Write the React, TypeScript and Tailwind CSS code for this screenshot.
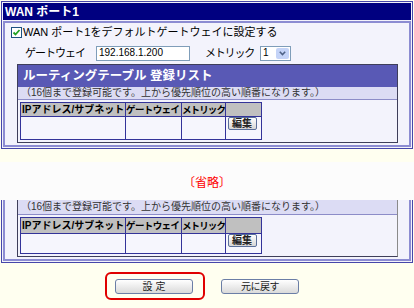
import React from "react";

const FONT = { fontFamily: "'Liberation Sans', 'Noto Sans CJK JP', sans-serif" };

function EditButton() {
  return (
    <div className="flex h-[13px] w-[29px] items-center justify-center rounded-[2px] border border-[#5a6f9a] bg-gradient-to-b from-white to-[#d6d6d6] text-[10px] font-bold leading-none text-[#222]">
      編集
    </div>
  );
}

function RouteTable({ headH, rowH }: { headH: number; rowH: number }) {
  return (
    <div className="ml-[2px] flex w-[242px] flex-col border border-[#333399]">
      <div className="flex bg-[#c0c0c0] text-[9.5px] font-bold leading-none text-black" style={{ height: headH }}>
        <div className="flex w-[105px] items-center overflow-hidden whitespace-nowrap border-r border-[#333399] pl-[1px] text-[10px] tracking-[0px]">IPアドレス/サブネット</div>
        <div className="flex w-[56px] items-center overflow-hidden whitespace-nowrap border-r border-[#333399] tracking-[-0.6px]">ゲートウェイ</div>
        <div className="flex w-[44px] items-center overflow-hidden whitespace-nowrap border-r border-[#333399] tracking-[-0.9px]">メトリック</div>
        <div className="w-[32px]"></div>
      </div>
      <div className="flex border-t border-[#333399] bg-[#f6f6fd]" style={{ height: rowH }}>
        <div className="w-[105px] border-r border-[#333399]"></div>
        <div className="w-[56px] border-r border-[#333399]"></div>
        <div className="w-[44px] border-r border-[#333399]"></div>
        <div className="flex w-[32px] justify-center">
          <EditButton />
        </div>
      </div>
    </div>
  );
}

function Note({ h }: { h: number }) {
  return (
    <div className="flex items-center whitespace-nowrap border-b border-[#8c8cc8] bg-[#dcdcf4] pl-[3px] text-[10px] leading-none text-[#333]" style={{ height: h }}>
      （16個まで登録可能です。上から優先順位の高い順番になります。）
    </div>
  );
}

function XpButton({ children, className }: { children: React.ReactNode; className?: string }) {
  return (
    <div className={"flex h-[15px] w-[78px] items-center justify-center rounded-[3px] border border-[#6b7ea6] bg-gradient-to-b from-white to-[#dadada] text-[10px] leading-none text-[#222] " + (className ?? "")}>
      {children}
    </div>
  );
}

export default function App() {
  return (
    <div className="relative h-[308px] w-[414px] overflow-hidden bg-[#fffff0]" style={FONT}>
      {/* Panel 1 */}
      <div className="mx-[1px] mt-[1px] border border-[#4646aa] bg-[#f2f2fb] p-[1px]">
        <div className="flex h-[17px] items-center bg-[#000080] pl-[2px] text-[12px] font-bold leading-none text-white">
          WAN ポート1
        </div>
        <div className="mt-[1px] border-2 border-[#8c8cd2] bg-[#f3f3fc] pb-[2px]">
          {/* checkbox row */}
          <div className="flex h-[18px] items-center pl-[6px]">
            <div className="flex h-[11px] w-[11px] items-center justify-center border border-[#1c5180] bg-white">
              <svg width="9" height="9" viewBox="0 0 9 9">
                <path d="M1.5 4.5 L3.5 6.5 L7.5 2" fill="none" stroke="#21a121" strokeWidth="1.8" />
              </svg>
            </div>
            <span className="ml-[1px] whitespace-nowrap text-[11px] leading-none text-black">WAN ポート1をデフォルトゲートウェイに設定する</span>
          </div>
          {/* gateway row */}
          <div className="mt-[3px] flex h-[18px] items-center">
            <span className="ml-[20px] w-[71px] whitespace-nowrap text-[11px] leading-none tracking-[-1px] text-black">ゲートウェイ</span>
            <div className="flex h-[15px] w-[94px] items-center border border-[#7f9db9] bg-white pl-[2px] text-[10px] leading-none text-black">
              192.168.1.200
            </div>
            <span className="ml-[15px] w-[55px] whitespace-nowrap text-[11px] leading-none tracking-[-1.2px] text-black">メトリック</span>
            <div className="flex h-[15px] w-[31px] items-center justify-between border border-[#7f9db9] bg-white pl-[2px] pr-[1px] text-[10px] leading-none text-black">
              <span>1</span>
              <div className="flex h-[11px] w-[13px] items-center justify-center rounded-[2px] bg-[#c4d3f7]">
                <svg width="7" height="5" viewBox="0 0 7 5">
                  <path d="M0.8 0.8 L3.5 3.6 L6.2 0.8" fill="none" stroke="#4d6185" strokeWidth="1.5" />
                </svg>
              </div>
            </div>
          </div>
          {/* routing box */}
          <div className="ml-[12px] mr-[11px] mt-[2px] border border-[#3e3e5a] bg-[#f3f3fc] pb-[2px]">
            <div className="flex h-[22px] items-center bg-[#5959b5] pl-[5px] text-[12.5px] font-bold leading-none text-white">
              ルーティングテーブル 登録リスト
            </div>
            <Note h={13} />
            <div className="mt-[2px]">
              <RouteTable headH={13} rowH={23} />
            </div>
          </div>
        </div>
      </div>

      {/* cream gap + omitted band */}
      <div className="h-[13px]"></div>
      <div className="flex h-[38px] items-center justify-center bg-[#fcfcfc] pt-[4px] text-[12px] leading-none text-[#ff0000]">
        〔省略〕
      </div>

      {/* Fragment panel */}
      <div className="mx-[1px] border-x border-b border-[#4646aa] bg-[#f2f2fb] px-[1px] pb-[1px]">
        <div className="border-x-2 border-b-2 border-[#8c8cd2] bg-[#f3f3fc] pb-[2px]">
          <div className="ml-[12px] mr-[11px] border-x border-b border-[#3e3e5a] border-r-[#8a8a8a] bg-[#f3f3fc] pb-[2px]">
            <Note h={15} />
            <div className="mt-[2px]">
              <RouteTable headH={15} rowH={20} />
            </div>
          </div>
        </div>
      </div>

      {/* buttons */}
      <div className="mt-[16px] flex justify-center gap-[28px]">
        <div className="relative">
          <div className="absolute -bottom-[6px] -left-[10px] -right-[12px] -top-[7px] rounded-[6px] border-2 border-[#e00000]"></div>
          <XpButton>設 定</XpButton>
        </div>
        <XpButton className="tracking-[-0.5px]">元に戻す</XpButton>
      </div>
    </div>
  );
}
